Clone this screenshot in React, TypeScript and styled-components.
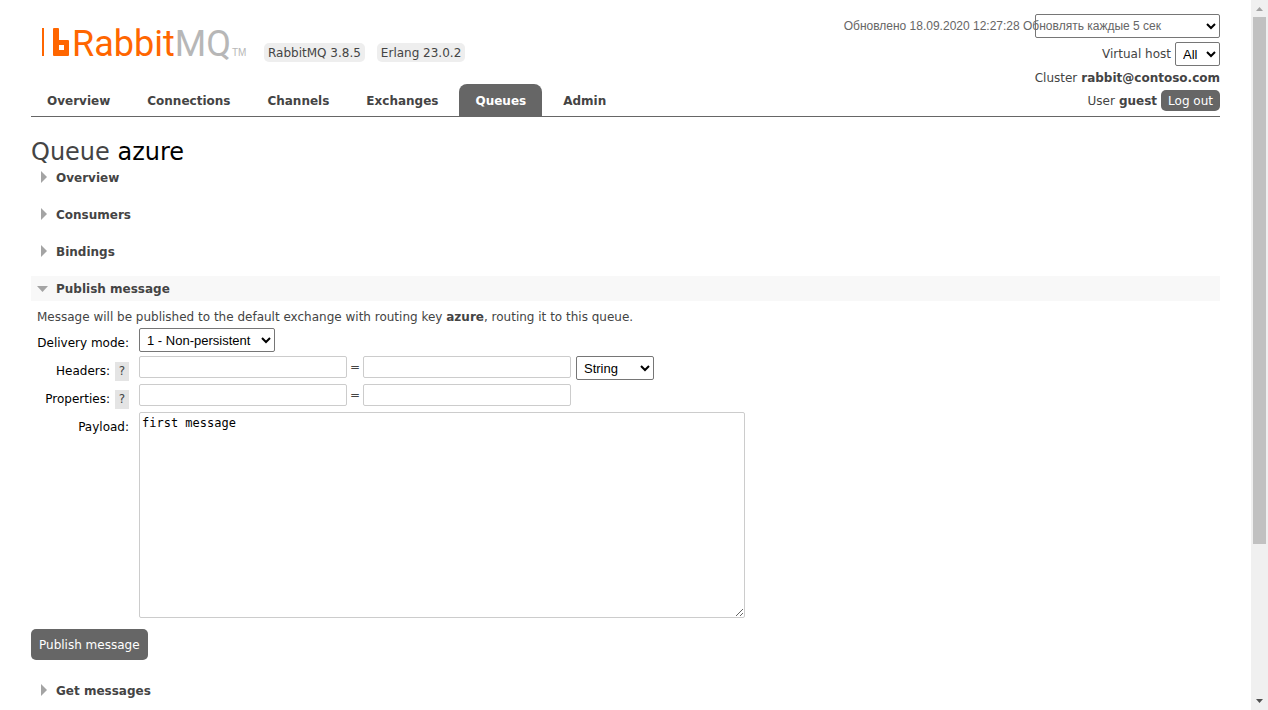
import React from "react";
import styled, { createGlobalStyle } from "styled-components";

const GlobalStyle = createGlobalStyle`
  * { box-sizing: border-box; }
  body {
    margin: 0;
    background: #fff;
    color: #444;
    font-family: "DejaVu Sans", Verdana, sans-serif;
    font-size: 12px;
    line-height: 16px;
  }
`;

const Page = styled.div`
  display: flex;
  height: 100vh;
  overflow: hidden;
`;

const Content = styled.div`
  flex: 1;
  min-width: 0;
  padding: 14px 31px 0;
  overflow: hidden;
`;

const ScrollTrack = styled.div`
  display: flex;
  flex-direction: column;
  align-items: center;
  width: 17px;
  background: #f0f0f0;
`;

const ScrollArrow = styled.svg`
  flex: none;
  width: 17px;
  height: 17px;
`;

const ScrollRail = styled.div`
  flex: 1;
  width: 13px;
`;

const ScrollThumb = styled.div`
  height: 78%;
  background: #c1c1c1;
`;

const Header = styled.header`
  display: flex;
  justify-content: space-between;
  border-bottom: 1px solid #666;
`;

const HeaderLeft = styled.div`
  display: flex;
  flex-direction: column;
  justify-content: space-between;
`;

const Brand = styled.div`
  display: flex;
  align-items: flex-end;
  gap: 12px;
  padding: 8px 0 0 11px;
`;

const Logo = styled.a`
  display: flex;
  text-decoration: none;
`;

const LogoDrawing = styled.svg`
  width: 210px;
  height: 40px;
  overflow: visible;
`;

const Tag = styled.span`
  padding: 2px 4px 1px;
  border-radius: 5px;
  background: #eee;
`;

const Tabs = styled.nav`
  display: flex;
  gap: 5px;
`;

const Tab = styled.a<{ $active?: boolean }>`
  padding: 9px 16px 7px;
  border-radius: 8px 8px 0 0;
  background: ${(p) => (p.$active ? "#666" : "transparent")};
  color: ${(p) => (p.$active ? "#fff" : "#444")};
  font-weight: bold;
  text-decoration: none;
`;

const Account = styled.div`
  display: flex;
  flex-direction: column;
  align-items: flex-end;
`;

const AccountRow = styled.div<{ $gap?: number }>`
  position: relative;
  display: flex;
  align-items: center;
  gap: 4px;
  margin-bottom: ${(p) => p.$gap ?? 4}px;
`;

const RefreshNote = styled.label`
  position: absolute;
  right: 59px;
  color: #666;
  font-family: "Liberation Sans", Arial, sans-serif;
  white-space: nowrap;
`;

const Select = styled.select<{ $width: number }>`
  width: ${(p) => p.$width}px;
  height: 24px;
  padding: 0 3px;
  border: 1px solid #767676;
  border-radius: 2px;
  background: transparent;
  color: #000;
  font-family: "Liberation Sans", Arial, sans-serif;
  font-size: 13px;
`;

const Button = styled.button<{ $small?: boolean }>`
  padding: ${(p) => (p.$small ? "3px 7px 2px" : "8px 8px 7px")};
  border: 0;
  border-radius: 5px;
  background: #666;
  color: #fff;
  font-family: inherit;
  font-size: 12px;
  line-height: 16px;
`;

const Title = styled.h1`
  margin: 23px 0 0;
  font-size: 24px;
  font-weight: normal;
  line-height: 25px;

  b {
    color: #000;
    font-weight: normal;
  }
`;

const Section = styled.section<{ $open?: boolean }>`
  margin-bottom: ${(p) => (p.$open ? 18 : 12)}px;
`;

const SectionHeading = styled.h2<{ $open?: boolean }>`
  display: flex;
  align-items: center;
  gap: 7px;
  margin: 0;
  padding: 5px 5px 4px;
  background: ${(p) => (p.$open ? "#f8f8f8" : "transparent")};
  font-size: 12px;
  line-height: 16px;
`;

const Caret = styled.svg`
  width: 13px;
  height: 14px;
  fill: #a4a4a4;
`;

const Hint = styled.p`
  margin: 0;
  padding: 8px 6px 3px;
`;

const Fields = styled.div`
  display: grid;
  grid-template-columns: 98px 1fr;
  column-gap: 10px;
  grid-auto-rows: minmax(28px, auto);
  margin-bottom: 11px;
`;

const FieldLabel = styled.div`
  display: flex;
  justify-content: flex-end;
  align-items: center;
  gap: 5px;
  height: 28px;
  padding-top: 2px;
  color: #000;
  white-space: nowrap;
`;

const Help = styled.button`
  width: 14px;
  height: 19px;
  padding: 0;
  border: 0;
  background: #e4e4e4;
  color: #444;
  font-family: inherit;
  font-size: 12px;
`;

const FieldValue = styled.div`
  display: flex;
  align-items: flex-start;
`;

const TextInput = styled.input`
  width: 208px;
  height: 22px;
  padding: 2px;
  border: 1px solid #ccc;
  border-radius: 2px;
`;

const Equals = styled.span`
  width: 16px;
  line-height: 22px;
  text-align: center;
`;

const TypeCell = styled.span`
  margin-left: 5px;
`;

const Payload = styled.textarea`
  width: 606px;
  height: 206px;
  padding: 2px;
  border: 1px solid #ccc;
  border-radius: 2px;
  color: #000;
  font-family: "DejaVu Sans Mono", monospace;
  font-size: 12px;
  line-height: 16px;
`;

const tabs = ["Overview", "Connections", "Channels", "Exchanges", "Queues", "Admin"];

function SectionTitle({ title, open }: { title: string; open?: boolean }) {
  return (
    <SectionHeading $open={open}>
      <Caret viewBox="0 0 13 14" aria-hidden="true">
        {open ? <path d="M1 4h11L6.500 10z" /> : <path d="M5 0l6 6-6 6z" />}
      </Caret>
      {title}
    </SectionHeading>
  );
}

function RabbitLogo() {
  return (
    <LogoDrawing viewBox="0 0 210 40" aria-label="RabbitMQ">
      <rect x="0" y="6" width="2" height="28" fill="#f60" />
      <path
        fill="#f60"
        fillRule="evenodd"
        d="M12 6h4a1 1 0 0 1 1 1v11h9a1 1 0 0 1 1 1v14a1 1 0 0 1-1 1H12a1 1 0 0 1-1-1V7a1 1 0 0 1 1-1zM17 23v5h5v-5z"
      />
      <text x="30" y="34" fontFamily="Roboto, sans-serif" fontSize="36" fill="#f60">
        Rabbit<tspan fill="#b7b7b7">MQ</tspan>
      </text>
      <text x="190" y="34" fontFamily="Liberation Sans, Arial, sans-serif" fontSize="10" fill="#b7b7b7">
        TM
      </text>
    </LogoDrawing>
  );
}

export default function App() {
  return (
    <>
      <GlobalStyle />
      <Page>
        <Content>
          <Header>
            <HeaderLeft>
              <Brand>
                <Logo href="#">
                  <RabbitLogo />
                </Logo>
                <Tag>RabbitMQ 3.8.5</Tag>
                <Tag>Erlang 23.0.2</Tag>
              </Brand>
              <Tabs>
                {tabs.map((t) => (
                  <Tab key={t} href="#" $active={t === "Queues"}>
                    {t}
                  </Tab>
                ))}
              </Tabs>
            </HeaderLeft>
            <Account>
              <AccountRow>
                <Select id="refresh" $width={185}>
                  <option></option>
                </Select>
                <RefreshNote htmlFor="refresh">Обновлено 18.09.2020 12:27:28 Обновлять каждые 5 сек</RefreshNote>
              </AccountRow>
              <AccountRow>
                <label htmlFor="vhost">Virtual host</label>
                <Select id="vhost" $width={45}>
                  <option>All</option>
                </Select>
              </AccountRow>
              <AccountRow>
                <span>Cluster</span>
                <b>rabbit@contoso.com</b>
              </AccountRow>
              <AccountRow $gap={5}>
                <span>User</span>
                <b>guest</b>
                <Button type="button" $small>
                  Log out
                </Button>
              </AccountRow>
            </Account>
          </Header>
          <main>
            <Title>
              Queue <b>azure</b>
            </Title>
            <Section>
              <SectionTitle title="Overview" />
            </Section>
            <Section>
              <SectionTitle title="Consumers" />
            </Section>
            <Section>
              <SectionTitle title="Bindings" />
            </Section>
            <Section $open>
              <SectionTitle title="Publish message" open />
              <Hint>
                Message will be published to the default exchange with routing key <b>azure</b>, routing it to this queue.
              </Hint>
              <form onSubmit={(e) => e.preventDefault()}>
                <Fields>
                  <FieldLabel>
                    <label htmlFor="mode">Delivery mode:</label>
                  </FieldLabel>
                  <FieldValue>
                    <Select id="mode" $width={136}>
                      <option>1 - Non-persistent</option>
                      <option>2 - Persistent</option>
                    </Select>
                  </FieldValue>
                  <FieldLabel>
                    <label htmlFor="header">Headers:</label>
                    <Help type="button">?</Help>
                  </FieldLabel>
                  <FieldValue>
                    <TextInput id="header" />
                    <Equals>=</Equals>
                    <TextInput aria-label="Header value" />
                    <TypeCell>
                      <Select aria-label="Header type" $width={78}>
                        <option>String</option>
                        <option>Number</option>
                        <option>Boolean</option>
                      </Select>
                    </TypeCell>
                  </FieldValue>
                  <FieldLabel>
                    <label htmlFor="prop">Properties:</label>
                    <Help type="button">?</Help>
                  </FieldLabel>
                  <FieldValue>
                    <TextInput id="prop" />
                    <Equals>=</Equals>
                    <TextInput aria-label="Property value" />
                  </FieldValue>
                  <FieldLabel>
                    <label htmlFor="payload">Payload:</label>
                  </FieldLabel>
                  <FieldValue>
                    <Payload id="payload" defaultValue="first message" />
                  </FieldValue>
                </Fields>
                <Button type="submit">Publish message</Button>
              </form>
            </Section>
            <Section>
              <SectionTitle title="Get messages" />
            </Section>
          </main>
        </Content>
        <ScrollTrack aria-hidden="true">
          <ScrollArrow viewBox="0 0 17 17">
            <path d="M5 11h7L8.500 7z" fill="#a3a3a3" />
          </ScrollArrow>
          <ScrollRail>
            <ScrollThumb />
          </ScrollRail>
          <ScrollArrow viewBox="0 0 17 17">
            <path d="M5 6h7L8.500 10z" fill="#505050" />
          </ScrollArrow>
        </ScrollTrack>
      </Page>
    </>
  );
}
